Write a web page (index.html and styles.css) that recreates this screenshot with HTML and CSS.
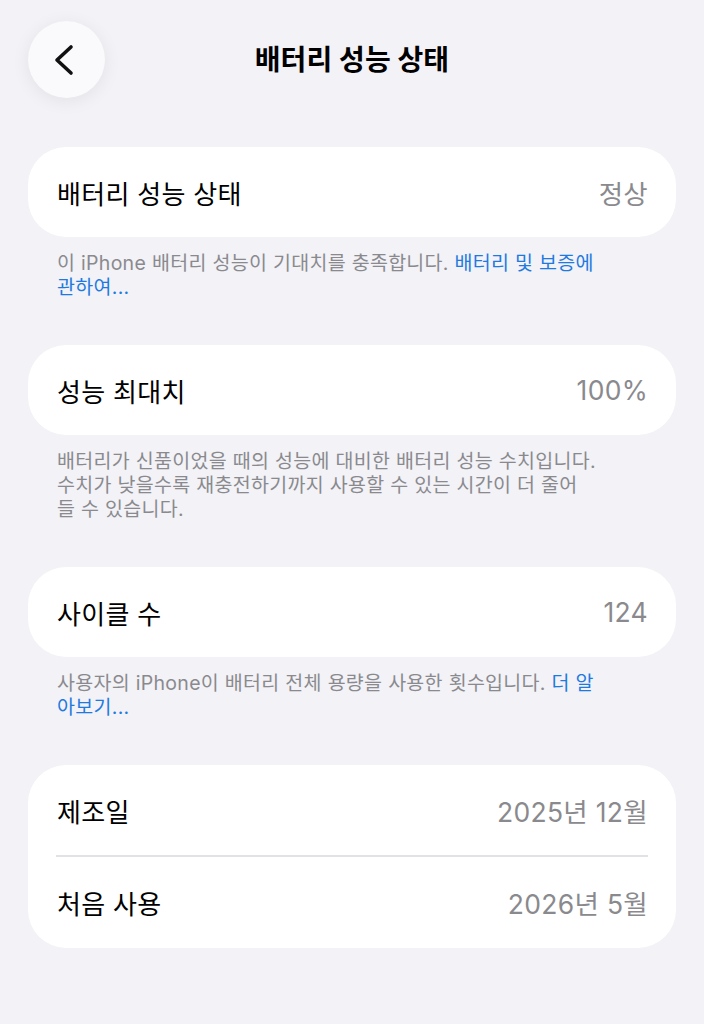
FILE: index.html
```html
<!DOCTYPE html>
<html lang="ko">
<head>
<meta charset="utf-8">
<title>배터리 성능 상태</title>
<link rel="stylesheet" href="styles.css">
</head>
<body>
<div class="page">
  <header class="nav">
    <button class="back" aria-label="뒤로">
      <svg width="30" height="34" viewBox="0 0 30 34"><path d="M21 4 L7 17 L21 30" fill="none" stroke="#111" stroke-width="3.6" stroke-linecap="round" stroke-linejoin="round"/></svg>
    </button>
    <h1 class="title">배터리 성능 상태</h1>
    <div></div>
  </header>

  <section class="group">
    <div class="card">
      <div class="row"><span class="label">배터리 성능 상태</span><span class="value">정상</span></div>
    </div>
    <p class="note">이 iPhone 배터리 성능이 기대치를 충족합니다. <a class="link" href="#">배터리 및 보증에<br>관하여...</a></p>
  </section>

  <section class="group">
    <div class="card">
      <div class="row"><span class="label">성능 최대치</span><span class="value">100%</span></div>
    </div>
    <p class="note">배터리가 신품이었을 때의 성능에 대비한 배터리 성능 수치입니다.<br>수치가 낮을수록 재충전하기까지 사용할 수 있는 시간이 더 줄어<br>들 수 있습니다.</p>
  </section>

  <section class="group">
    <div class="card">
      <div class="row"><span class="label">사이클 수</span><span class="value">124</span></div>
    </div>
    <p class="note">사용자의 iPhone이 배터리 전체 용량을 사용한 횟수입니다. <a class="link" href="#">더 알<br>아보기...</a></p>
  </section>

  <section class="group">
    <div class="card">
      <div class="row"><span class="label">제조일</span><span class="value">2025년 12월</span></div>
      <div class="divider"></div>
      <div class="row"><span class="label">처음 사용</span><span class="value">2026년 5월</span></div>
    </div>
  </section>
</div>
</body>
</html>
```
FILE: styles.css
```css
* { box-sizing: border-box; }
html, body {
  margin: 0;
  padding: 0;
  background: #f2f2f7;
}
body {
  font-family: "Inter", "Noto Sans CJK KR", sans-serif;
  color: #000;
  width: 704px;
  min-height: 1024px;
}
.page {
  padding: 21px 28px 0;
}
.nav {
  display: grid;
  grid-template-columns: 1fr auto 1fr;
  align-items: center;
  height: 77px;
  margin-bottom: 49px;
}
.back {
  width: 77px;
  height: 77px;
  border-radius: 50%;
  border: none;
  background: #fafafc;
  box-shadow: 0 3px 18px rgba(0, 0, 0, 0.07);
  display: flex;
  align-items: center;
  justify-content: center;
  padding: 0 4px 0 0;
  margin: 0;
}
.title {
  margin: 0;
  font-size: 28px;
  font-weight: 700;
  letter-spacing: 0.1px;
  text-align: center;
  line-height: 1;
}
.group {
  margin-bottom: 46px;
}
.card {
  background: #fff;
  border-radius: 38px;
  padding: 0 28px 0 29px;
}
.row {
  height: 90px;
  display: flex;
  align-items: center;
  justify-content: space-between;
}
.label {
  font-size: 26px;
  letter-spacing: 0.3px;
  color: #000;
}
.value {
  font-size: 26.5px;
  letter-spacing: 0.3px;
  color: #8a8a8e;
}
.divider {
  height: 1.5px;
  background: #e1e1e6;
  margin: 0 0 0 -1px;
}
.card .row + .divider + .row { height: 91px; }
.note {
  margin: 14px 0 0;
  padding: 0 29px;
  font-size: 19.5px;
  letter-spacing: 0.3px;
  line-height: 24px;
  color: #8a8a8e;
  white-space: nowrap;
}
.link {
  color: #1f7ae0;
  text-decoration: none;
}
```
